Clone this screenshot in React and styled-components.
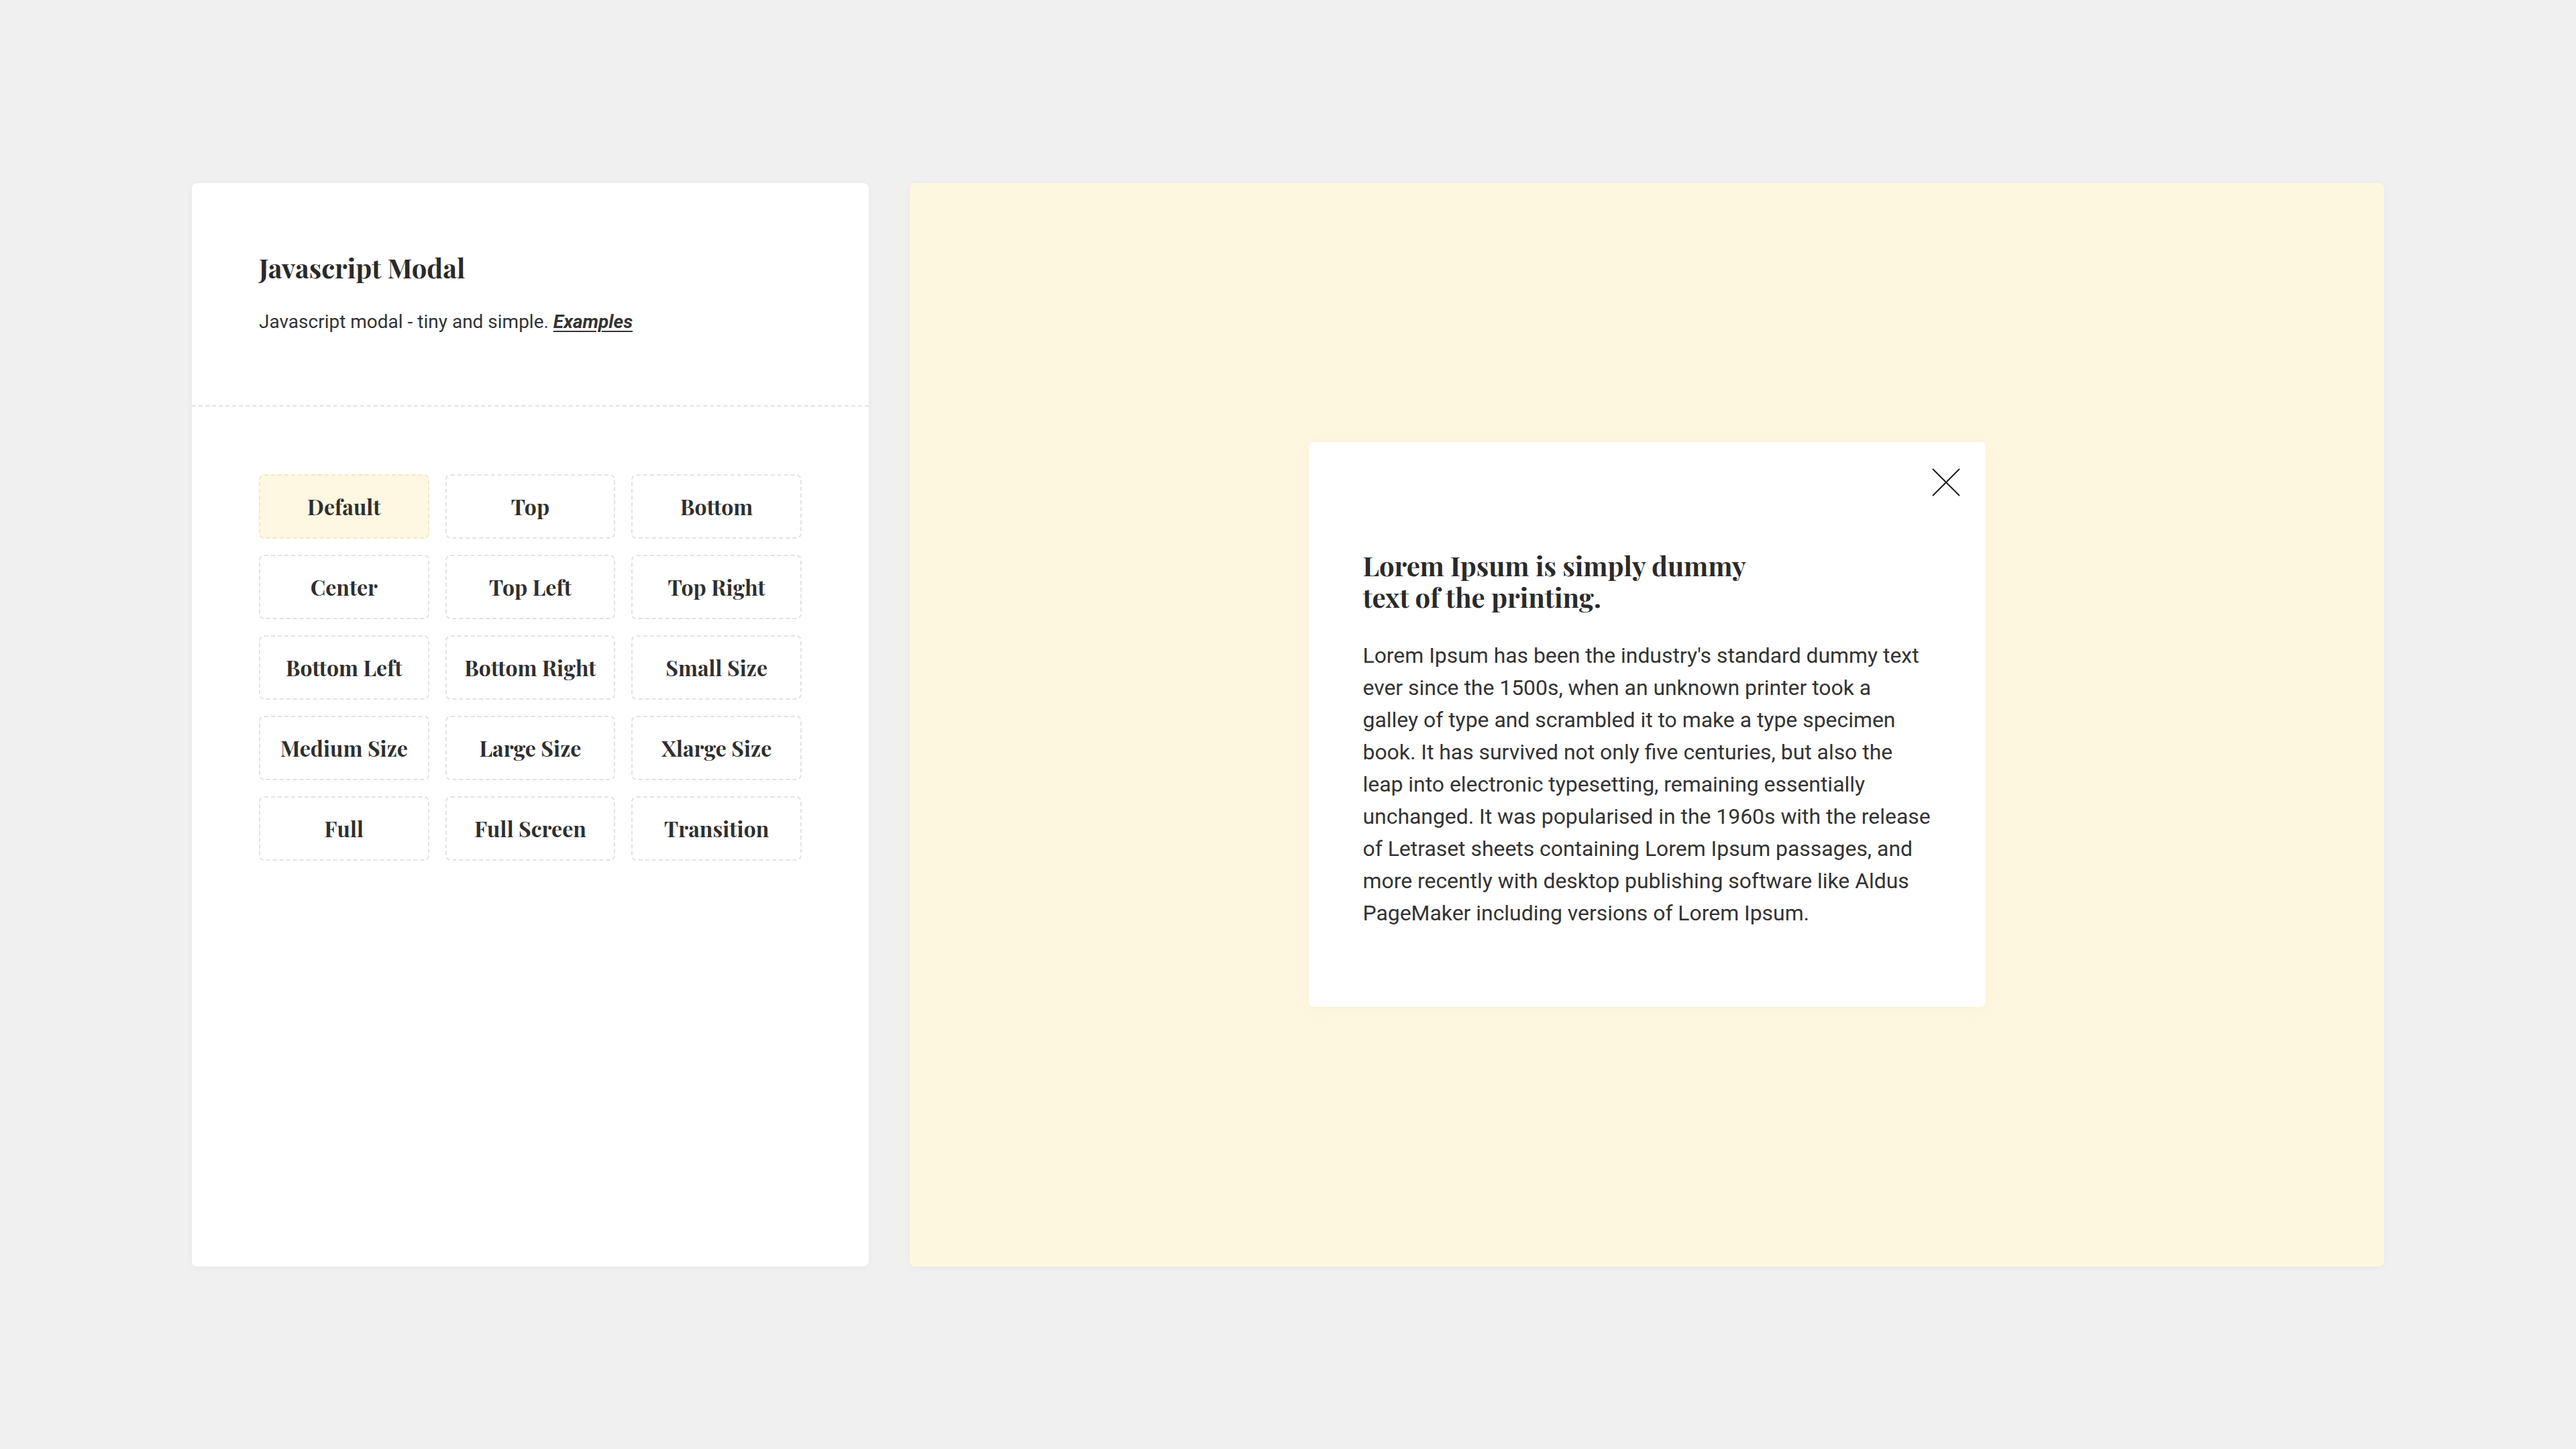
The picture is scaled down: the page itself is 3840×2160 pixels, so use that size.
import React from "react";
import styled, { createGlobalStyle } from "styled-components";

const GlobalStyle = createGlobalStyle`
  html, body {
    margin: 0;
    padding: 0;
    background: #f0f0f0;
  }
  * {
    box-sizing: border-box;
  }
`;

const buttons = [
  "Default",
  "Top",
  "Bottom",
  "Center",
  "Top Left",
  "Top Right",
  "Bottom Left",
  "Bottom Right",
  "Small Size",
  "Medium Size",
  "Large Size",
  "Xlarge Size",
  "Full",
  "Full Screen",
  "Transition",
];

// lines kept as in the design so the wrap doesn't depend on the font metrics
const bodyLines = [
  "Lorem Ipsum has been the industry's standard dummy text",
  "ever since the 1500s, when an unknown printer took a",
  "galley of type and scrambled it to make a type specimen",
  "book. It has survived not only five centuries, but also the",
  "leap into electronic typesetting, remaining essentially",
  "unchanged. It was popularised in the 1960s with the release",
  "of Letraset sheets containing Lorem Ipsum passages, and",
  "more recently with desktop publishing software like Aldus",
  "PageMaker including versions of Lorem Ipsum.",
];

const App = () => {
  return (
    <Page>
      <GlobalStyle />
      <Layout>
        <Sidebar>
          <Header>
            <Title>Javascript Modal</Title>
            <Subtitle>
              Javascript modal - tiny and simple. <a href="#">Examples</a>
            </Subtitle>
          </Header>
          <ButtonGrid>
            {buttons.map((label, index) => (
              <OptionButton key={label} $active={index === 0}>
                {label}
              </OptionButton>
            ))}
          </ButtonGrid>
        </Sidebar>
        <Stage>
          <Modal>
            <CloseButton aria-label="Close">
              <svg width="42" height="42" viewBox="0 0 42 42">
                <line x1="1" y1="1" x2="41" y2="41" stroke="#1a1a1a" strokeWidth="2" />
                <line x1="41" y1="1" x2="1" y2="41" stroke="#1a1a1a" strokeWidth="2" />
              </svg>
            </CloseButton>
            <ModalTitle>
              Lorem Ipsum is simply dummy
              <br />
              text of the printing.
            </ModalTitle>
            <ModalText>
              {bodyLines.map((line, i) => (
                <React.Fragment key={i}>
                  {line}
                  {i < bodyLines.length - 1 && <br />}
                </React.Fragment>
              ))}
            </ModalText>
          </Modal>
        </Stage>
      </Layout>
    </Page>
  );
};

const Page = styled.div`
  min-height: 100vh;
  display: flex;
  align-items: center;
  justify-content: center;
  font-family: Roboto, "Liberation Sans", sans-serif;
`;

const Layout = styled.div`
  display: flex;
  gap: 61px;
  height: 1615px;
`;

const Card = styled.div`
  border-radius: 8px;
  box-shadow: 0 2px 12px rgba(0, 0, 0, 0.04);
`;

const Sidebar = styled(Card)`
  width: 1009px;
  background: #ffffff;
`;

const Header = styled.div`
  padding: 102px 100px 103px;
  border-bottom: 2px dashed #e2e2e2;
`;

const Title = styled.h1`
  margin: 0 0 36px;
  font-family: "Playfair Display", "Liberation Serif", serif;
  font-size: 40px;
  line-height: 48px;
  font-weight: 700;
  color: #2a2a2a;
`;

const Subtitle = styled.p`
  margin: 0;
  font-size: 28px;
  line-height: 42px;
  color: #333333;

  a {
    color: #333333;
    font-weight: 700;
    font-style: italic;
    text-decoration: underline;
    text-underline-offset: 4px;
    text-decoration-thickness: 2px;
  }
`;

const ButtonGrid = styled.div`
  padding: 101px 100px;
  display: grid;
  grid-template-columns: repeat(3, 1fr);
  grid-auto-rows: 96px;
  gap: 24px;
`;

const OptionButton = styled.button`
  display: flex;
  align-items: center;
  justify-content: center;
  border: 2px dashed ${(p) => (p.$active ? "#f2e8c6" : "#e2e2e2")};
  border-radius: 8px;
  background: ${(p) => (p.$active ? "#fef7e1" : "#ffffff")};
  font-family: "Playfair Display", "Liberation Serif", serif;
  font-size: 32px;
  font-weight: 700;
  color: #2f2f2f;
  cursor: pointer;
  padding: 0;
`;

const Stage = styled(Card)`
  width: 2198px;
  background: #fef7e0;
  display: flex;
  align-items: center;
  justify-content: center;
`;

const Modal = styled.div`
  position: relative;
  width: 1009px;
  padding: 160px 70px 116px 81px;
  background: #ffffff;
  border-radius: 8px;
  box-shadow: 0 4px 20px rgba(180, 160, 100, 0.08);
`;

const CloseButton = styled.button`
  position: absolute;
  top: 39px;
  right: 38px;
  width: 42px;
  height: 42px;
  padding: 0;
  border: none;
  background: none;
  cursor: pointer;

  svg {
    display: block;
  }
`;

const ModalTitle = styled.h2`
  margin: 0 0 40px;
  font-family: "Playfair Display", "Liberation Serif", serif;
  font-size: 40px;
  line-height: 47px;
  font-weight: 700;
  color: #2a2a2a;
`;

const ModalText = styled.p`
  margin: 0;
  font-size: 31.9px;
  line-height: 48px;
  color: #333333;
  white-space: nowrap;
`;

export default App;
